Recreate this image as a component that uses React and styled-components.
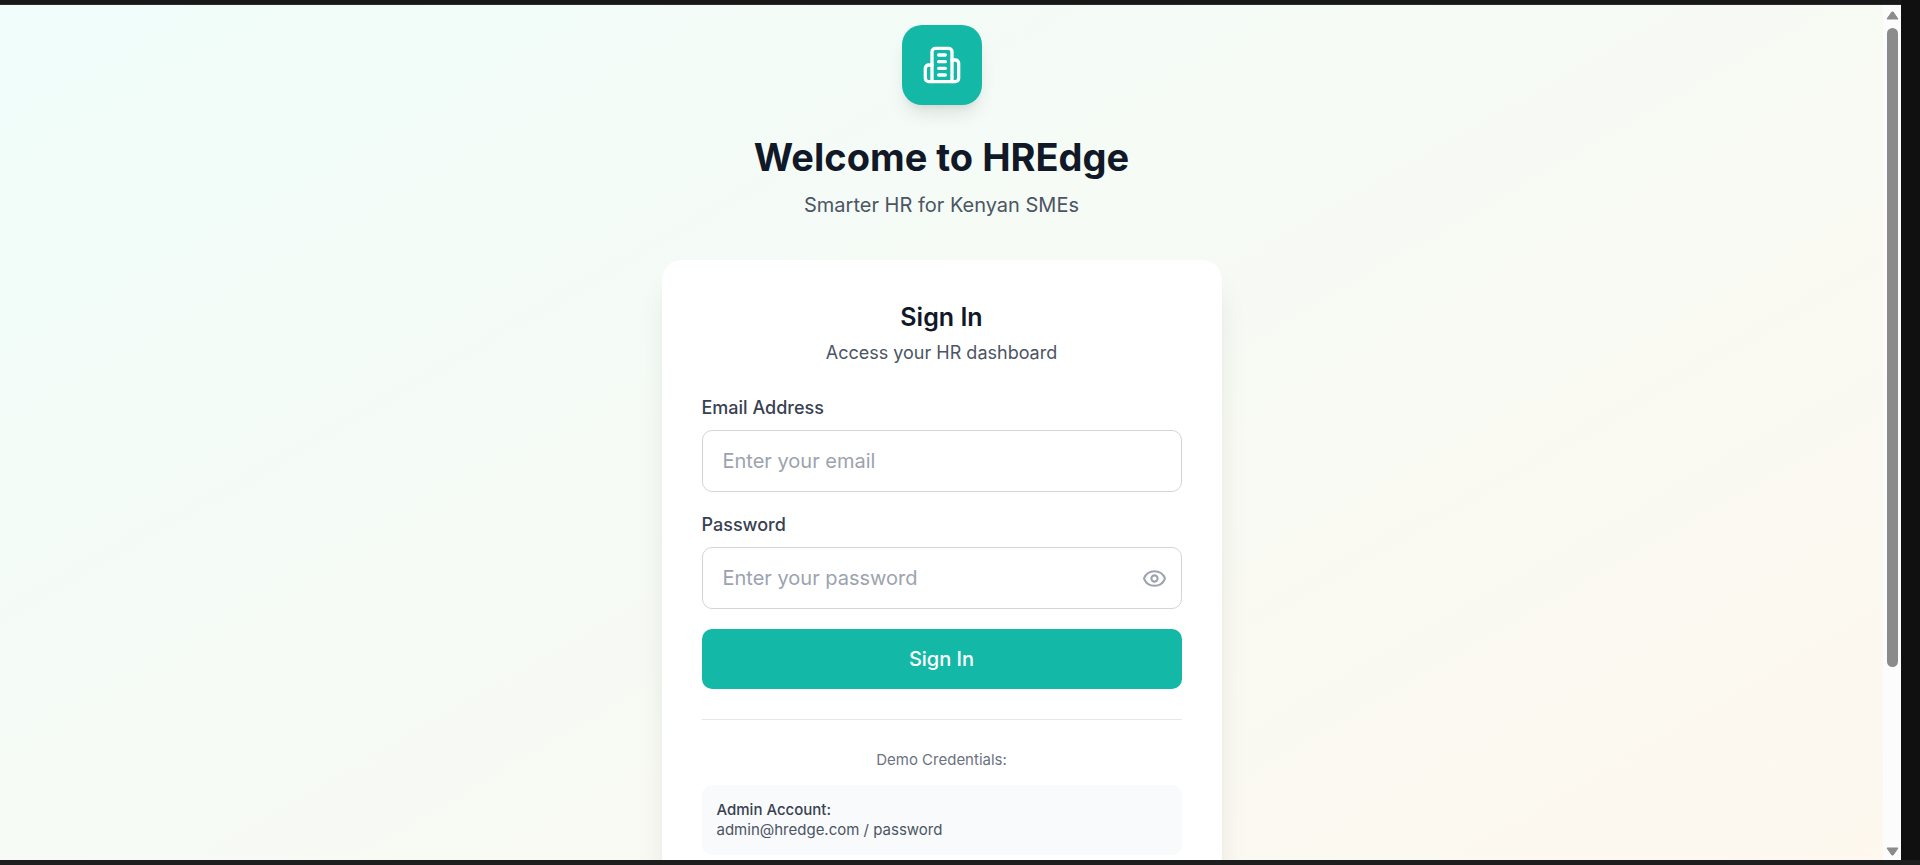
import React, { useState } from "react";
import styled, { createGlobalStyle } from "styled-components";

const GlobalStyle = createGlobalStyle`
  *, *::before, *::after { box-sizing: border-box; }
  html, body { margin: 0; padding: 0; background: #101010; }
  body, button, input { font-family: Inter, "Liberation Sans", sans-serif; }
  h1, h2, p { margin: 0; }
`;

const Window = styled.div`
  display: flex;
  flex-direction: column;
  height: 100vh;
  overflow: hidden;
  background: #101010;
`;

const TopEdge = styled.div`
  flex: none;
  height: 5px;
  margin-right: 19px;
  background: #181818;
  border-bottom: 1px solid #2b2b2b;
`;

const BottomEdge = styled.div`
  flex: none;
  height: 5px;
  background: #1e1e1e;
`;

const Viewport = styled.div`
  flex: 1;
  min-height: 0;
  display: flex;
  padding-right: 19px;
`;

const Scroller = styled.div`
  flex: 1;
  min-width: 0;
  overflow: hidden;
`;

const Page = styled.main`
  display: flex;
  flex-direction: column;
  align-items: center;
  min-height: 125vh;
  padding: 20px;
  background: linear-gradient(to bottom right, #f0fdfa, #fff7ed);
`;

const Column = styled.div`
  width: 100%;
  max-width: 560px;
`;

const Brand = styled.header`
  display: flex;
  flex-direction: column;
  align-items: center;
  margin-bottom: 40px;
  text-align: center;
`;

const LogoTile = styled.div`
  display: flex;
  align-items: center;
  justify-content: center;
  width: 80px;
  height: 80px;
  margin-bottom: 30px;
  border-radius: 20px;
  background: #14b8a6;
  color: #fff;
  box-shadow: 0 12px 18px -4px rgba(0, 0, 0, 0.1), 0 5px 8px -5px rgba(0, 0, 0, 0.1);
`;

const Title = styled.h1`
  margin-bottom: 10px;
  font-size: 38px;
  line-height: 45px;
  font-weight: 700;
  color: #111827;
`;

const Tagline = styled.p`
  font-size: 20px;
  line-height: 30px;
  color: #4b5563;
`;

const Card = styled.section`
  padding: 40px;
  border-radius: 20px;
  background: #fff;
  box-shadow: 0 25px 32px -6px rgba(0, 0, 0, 0.1), 0 10px 12px -8px rgba(0, 0, 0, 0.1);
`;

const CardHeader = styled.div`
  margin-bottom: 30px;
  text-align: center;
`;

const CardTitle = styled.h2`
  margin-bottom: 5px;
  font-size: 25px;
  line-height: 35px;
  font-weight: 600;
  color: #111827;
`;

const CardText = styled.p`
  font-size: 18px;
  line-height: 25px;
  color: #4b5563;
`;

const Form = styled.form`
  display: flex;
  flex-direction: column;
  gap: 20px;
`;

const Field = styled.div`
  display: flex;
  flex-direction: column;
  gap: 10px;
`;

const Label = styled.label`
  font-size: 18px;
  line-height: 25px;
  font-weight: 500;
  color: #374151;
`;

const InputBox = styled.div`
  position: relative;
`;

const Input = styled.input`
  display: block;
  width: 100%;
  height: 62px;
  padding: 15px ${(p) => (p.$withToggle ? "60px" : "20px")} 15px 20px;
  border: 1px solid #d1d5db;
  border-radius: 10px;
  background: #fff;
  font-size: 20px;
  line-height: 30px;
  color: #111827;
  outline: none;

  &::placeholder { color: #9ca3af; opacity: 1; }
  &:focus { border-color: #14b8a6; }
`;

const Toggle = styled.button`
  position: absolute;
  top: 0;
  bottom: 0;
  right: 15px;
  display: flex;
  align-items: center;
  padding: 0;
  border: 0;
  background: none;
  color: #9ca3af;
  cursor: pointer;
`;

const Submit = styled.button`
  height: 60px;
  padding: 15px 20px;
  border: 0;
  border-radius: 10px;
  background: #14b8a6;
  color: #fff;
  font-size: 20px;
  line-height: 30px;
  font-weight: 500;
  cursor: pointer;
`;

const Demo = styled.div`
  margin-top: 30px;
  padding-top: 30px;
  border-top: 1px solid #e5e7eb;
  font-size: 15px;
  line-height: 20px;
`;

const DemoHeading = styled.p`
  margin-bottom: 15px;
  text-align: center;
  color: #6b7280;
`;

const Account = styled.div`
  padding: 15px;
  border-radius: 10px;
  background: #f9fafb;
`;

const AccountName = styled.p`
  font-weight: 500;
  color: #374151;
`;

const AccountLogin = styled.p`
  color: #4b5563;
`;

const Scrollbar = styled.div`
  flex: none;
  display: flex;
  flex-direction: column;
  align-items: center;
  width: 18px;
  padding: 6px 0 4px;
  gap: 8px;
  background: #fcfcfc;
`;

const Track = styled.div`
  flex: 1;
  display: grid;
  grid-template-rows: 63fr 17fr;
  width: 11px;
`;

const Thumb = styled.div`
  border-radius: 6px;
  background: #8b8b8b;
`;

function BuildingIcon() {
  return (
    <svg width="40" height="40" viewBox="0 0 24 24" fill="none" stroke="currentColor" strokeWidth="2" strokeLinecap="round" strokeLinejoin="round" aria-hidden="true">
      <path d="M6 22V4a2 2 0 0 1 2-2h8a2 2 0 0 1 2 2v18Z" />
      <path d="M6 12H4a2 2 0 0 0-2 2v6a2 2 0 0 0 2 2h2" />
      <path d="M18 9h2a2 2 0 0 1 2 2v9a2 2 0 0 1-2 2h-2" />
      <path d="M10 6h4M10 10h4M10 14h4M10 18h4" />
    </svg>
  );
}

function EyeIcon() {
  return (
    <svg width="25" height="25" viewBox="0 0 24 24" fill="none" stroke="currentColor" strokeWidth="2" strokeLinecap="round" strokeLinejoin="round" aria-hidden="true">
      <path d="M2.062 12.348a1 1 0 0 1 0-.696 10.75 10.75 0 0 1 19.876 0 1 1 0 0 1 0 .696 10.75 10.75 0 0 1-19.876 0" />
      <circle cx="12" cy="12" r="3" />
    </svg>
  );
}

function Arrow({ down }) {
  return (
    <svg width="13" height="9" viewBox="0 0 13 9" fill="#8b8b8b" stroke="#8b8b8b" strokeLinejoin="round" aria-hidden="true">
      <path d={down ? "M1 1H12L7.2 8H5.8Z" : "M1 8H12L7.2 1H5.8Z"} />
    </svg>
  );
}

export default function App() {
  const [visible, setVisible] = useState(false);

  return (
    <>
      <GlobalStyle />
      <Window>
        <TopEdge />
        <Viewport>
          <Scroller>
            <Page>
              <Column>
                <Brand>
                  <LogoTile>
                    <BuildingIcon />
                  </LogoTile>
                  <Title>Welcome to HREdge</Title>
                  <Tagline>Smarter HR for Kenyan SMEs</Tagline>
                </Brand>
                <Card>
                  <CardHeader>
                    <CardTitle>Sign In</CardTitle>
                    <CardText>Access your HR dashboard</CardText>
                  </CardHeader>
                  <Form onSubmit={(e) => e.preventDefault()}>
                    <Field>
                      <Label htmlFor="email">Email Address</Label>
                      <Input id="email" type="email" placeholder="Enter your email" />
                    </Field>
                    <Field>
                      <Label htmlFor="password">Password</Label>
                      <InputBox>
                        <Input
                          id="password"
                          type={visible ? "text" : "password"}
                          placeholder="Enter your password"
                          $withToggle
                        />
                        <Toggle type="button" aria-label="Show password" aria-pressed={visible} onClick={() => setVisible(!visible)}>
                          <EyeIcon />
                        </Toggle>
                      </InputBox>
                    </Field>
                    <Submit type="submit">Sign In</Submit>
                  </Form>
                  <Demo>
                    <DemoHeading>Demo Credentials:</DemoHeading>
                    <Account>
                      <AccountName>Admin Account:</AccountName>
                      <AccountLogin>admin@hredge.com / password</AccountLogin>
                    </Account>
                  </Demo>
                </Card>
              </Column>
            </Page>
          </Scroller>
          <Scrollbar aria-hidden="true">
            <Arrow />
            <Track>
              <Thumb />
            </Track>
            <Arrow down />
          </Scrollbar>
        </Viewport>
        <BottomEdge />
      </Window>
    </>
  );
}
